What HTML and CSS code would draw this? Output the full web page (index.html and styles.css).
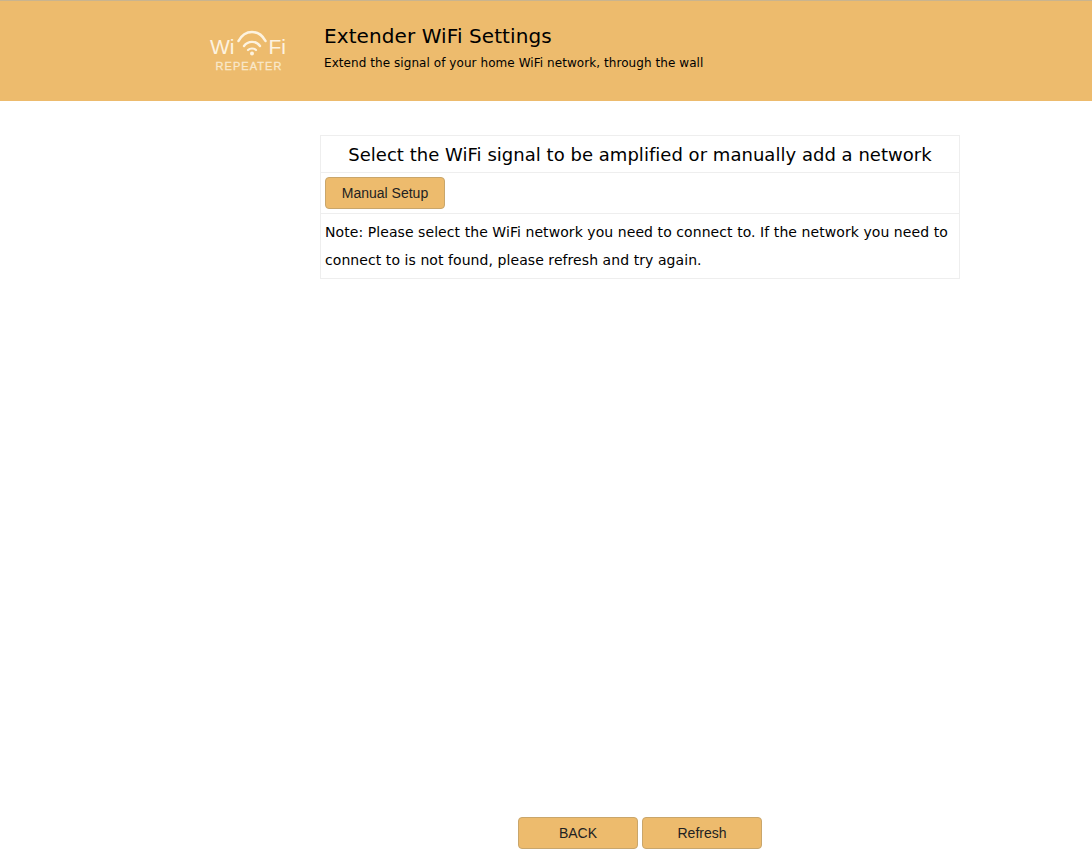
FILE: index.html
```html
<!DOCTYPE html>
<html lang="en">
<head>
<meta charset="utf-8">
<title>Extender WiFi Settings</title>
<link rel="stylesheet" href="styles.css">
</head>
<body>
<div class="page">
  <header class="header">
    <div class="logo">
      <div class="logo-top">
        <span class="logo-word">Wi</span>
        <svg class="logo-icon" width="30" height="28" viewBox="0 0 30 28" fill="none" stroke="#fdf3e0" stroke-linecap="round">
          <path d="M1.5 11C8 -1 22 -1 28.5 11" stroke-width="2.6"/>
          <path d="M7 16C11 10.5 19 10.5 23 16" stroke-width="2.4"/>
          <path d="M11 20C13 18 17 18 19 20" stroke-width="2.2"/>
          <circle cx="15" cy="23.5" r="2" fill="#fdf3e0" stroke="none"/>
        </svg>
        <span class="logo-word">Fi</span>
      </div>
      <div class="logo-sub">REPEATER</div>
    </div>
    <div class="head-text">
      <h1 class="title">Extender WiFi Settings</h1>
      <p class="subtitle">Extend the signal of your home WiFi network, through the wall</p>
    </div>
  </header>
  <main class="main">
    <section class="panel">
      <h2 class="panel-title">Select the WiFi signal to be amplified or manually add a network</h2>
      <div class="panel-action"><button class="btn" type="button">Manual Setup</button></div>
      <p class="note">Note: Please select the WiFi network you need to connect to. If the network you need to connect to is not found, please refresh and try again.</p>
    </section>
  </main>
  <footer class="footer">
    <button class="btn btn-foot" type="button">BACK</button>
    <button class="btn btn-foot" type="button">Refresh</button>
  </footer>
</div>
</body>
</html>
```
FILE: styles.css
```css
* { box-sizing: border-box; }
html, body { margin: 0; padding: 0; height: 100%; }
body { background: #fff; color: #000; font-family: "DejaVu Sans", Verdana, sans-serif; overflow: hidden; }
.page { height: 865px; display: flex; flex-direction: column; }
.header {
  height: 101px; flex: none; background: #edbb6d; border-top: 1px solid #c9b48f;
  display: flex; align-items: flex-start; padding-left: 210px;
}
.logo { width: 76px; margin-top: 29px; color: #fdf3e0; font-family: "Liberation Sans", Arial, sans-serif; }
.logo-top { display: flex; align-items: flex-end; justify-content: space-between; height: 29px; }
.logo-word { font-size: 21px; line-height: 24px; font-weight: 400; }
.logo-icon { flex: none; align-self: flex-start; }
.logo-sub { font-size: 11px; line-height: 13px; margin-top: 1px; text-align: center; letter-spacing: 1.05px; padding-left: 2px; color: #f9e8cb; -webkit-text-stroke: .3px #f9e8cb; }
.head-text { margin-left: 38px; padding-top: 22px; }
.title { margin: 0; font-size: 20px; line-height: 26px; font-weight: 400; letter-spacing: .09px; }
.subtitle { margin: 6px 0 0; font-size: 12px; line-height: 16px; letter-spacing: .065px; }
.main { flex: 1; padding: 34px 0 0 320px; }
.panel { width: 640px; border: 1px solid #eeeeee; }
.panel-title {
  margin: 0; height: 37px; font-size: 18px; line-height: 37px; font-weight: 400;
  text-align: center; border-bottom: 1px solid #eeeeee; letter-spacing: .03px;
}
.panel-action { height: 41px; padding: 4px; border-bottom: 1px solid #eeeeee; }
.btn {
  display: block; width: 120px; height: 32px; padding: 0; background: #edbb6d;
  border: 1px solid #c9a66b; border-radius: 4px; color: #222;
  font-family: "Liberation Sans", Arial, sans-serif; font-size: 14px;
}
.note { margin: 0; padding: 4px; font-size: 14px; line-height: 28px; letter-spacing: .07px; }
.footer { display: flex; justify-content: center; gap: 4px; height: 48px; flex: none; padding-left: 188px; }
```
